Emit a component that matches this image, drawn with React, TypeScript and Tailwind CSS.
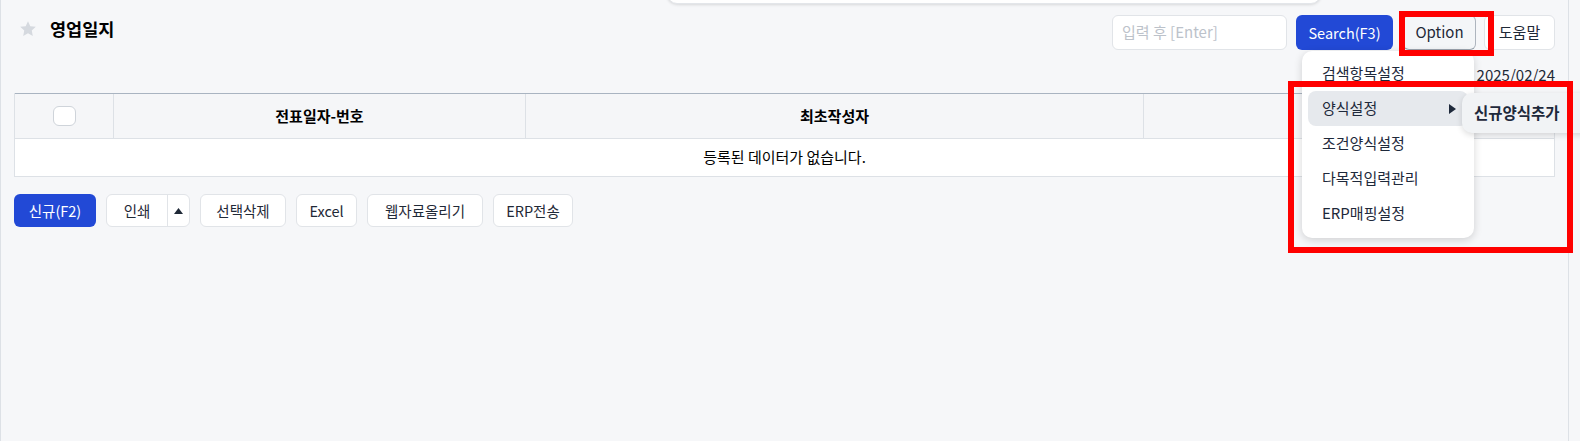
const menuItems = ["검색항목설정", "양식설정", "조건양식설정", "다목적입력관리", "ERP매핑설정"];

const bottomButtons = [
	{ label: "선택삭제", w: "w-[86px]" },
	{ label: "Excel", w: "w-[61px]" },
	{ label: "웹자료올리기", w: "w-[116px]" },
	{ label: "ERP전송", w: "w-[80px]" },
];

function Star() {
	return (
		<svg width="18" height="18" viewBox="0 0 24 24" fill="#d5d9df">
			<path d="M12 1.5l3.1 6.7 7.3.9-5.4 5 1.4 7.2L12 17.8l-6.4 3.5 1.4-7.2-5.4-5 7.3-.9z" />
		</svg>
	);
}

export default function App() {
	return (
		<div className="relative h-[441px] w-[1580px] overflow-hidden bg-[#f6f7f9] font-['Noto_Sans_CJK_KR','Noto_Sans',sans-serif] text-[#1f2937]">
			<div className="h-full w-[1569px] border-l border-r border-[#dde1e6] px-[13px]">
				{/* title + search */}
				<div className="flex h-[50px] items-start justify-between pt-[15px]">
					<div className="flex h-[28px] items-center gap-[13px] pl-[5px]">
						<Star />
						<span className="text-[17.5px] font-bold leading-none text-black">영업일지</span>
					</div>
					<div className="flex items-center">
						<div className="flex h-[35px] w-[175px] items-center rounded-md border border-[#e1e4e8] bg-white pl-[9px] text-[15px] text-[#bcc2ca]">
							입력 후 [Enter]
						</div>
						<button className="ml-[9px] h-[35px] w-[97px] rounded-md bg-[#2249d6] text-[14.5px] text-white">
							Search(F3)
						</button>
						<button className="ml-[10px] h-[35px] w-[73px] rounded-md border border-[#cfd4da] border-b-[#9aa3ad] border-r-[#aeb5be] bg-[#f4f6f8] text-[15px] text-[#1f2937]">
							Option
						</button>
						<button className="ml-[8px] h-[35px] w-[71px] rounded-md border border-[#e1e4e8] bg-white text-[15px] text-[#1f2937]">
							도움말
						</button>
					</div>
				</div>

				{/* date */}
				<div className="flex h-[43px] items-end justify-end pb-[8px] text-[15px] leading-[20px] text-[#1f2937]">
					2025/02/01 ~ 2025/02/24
				</div>

				{/* grid */}
				<div className="border-l border-r border-[#dde1e6]">
					<div className="flex h-[46px] border-t border-b border-t-[#a9b4c1] border-b-[#dde1e6] bg-[#f5f6f8] text-[15px] font-bold text-black">
						<div className="flex w-[99px] items-center justify-center border-r border-[#dde1e6]">
							<div className="h-[20px] w-[23px] rounded-md border border-[#cfd4da] bg-white" />
						</div>
						<div className="flex w-[412px] items-center justify-center border-r border-[#dde1e6]">
							전표일자-번호
						</div>
						<div className="flex w-[618px] items-center justify-center border-r border-[#dde1e6]">
							최초작성자
						</div>
						<div className="flex flex-1 items-center justify-center" />
					</div>
					<div className="flex h-[38px] items-center justify-center border-b border-[#dde1e6] bg-white text-[15px] text-black">
						등록된 데이터가 없습니다.
					</div>
				</div>

				{/* actions */}
				<div className="mt-[17px] flex h-[33px] gap-[10px] text-[14.5px]">
					<button className="w-[82px] rounded-md bg-[#2249d6] text-white">신규(F2)</button>
					<div className="flex w-[84px] rounded-md border border-[#e1e4e8] bg-white">
						<button className="w-[61px] border-r border-[#e1e4e8]">인쇄</button>
						<button className="flex flex-1 items-center justify-center">
							<svg width="9" height="6" viewBox="0 0 9 6" fill="#1f2937">
								<path d="M4.5 0L9 6H0z" />
							</svg>
						</button>
					</div>
					{bottomButtons.map((b) => (
						<button key={b.label} className={`${b.w} rounded-md border border-[#e1e4e8] bg-white text-[#1f2937]`}>
							{b.label}
						</button>
					))}
				</div>
			</div>

			{/* popover from above */}
			<div className="absolute left-[667px] top-[-12px] h-[16px] w-[654px] rounded-b-[10px] border border-[#e3e6ea] bg-white shadow-[0_1px_3px_rgba(0,0,0,0.12)]" />

			{/* option dropdown */}
			<div className="absolute left-[1302px] top-[51px] h-[187px] w-[172px] rounded-[10px] bg-white px-[6px] pt-[5px] shadow-[0_2px_8px_rgba(0,0,0,0.16)]">
				{menuItems.map((item) => (
					<div
						key={item}
						className={`flex h-[35px] items-center justify-between rounded-lg pl-[14px] pr-[12px] text-[15px] text-[#1e293b] ${item === "양식설정" ? "bg-[#e6e9ed]" : ""}`}
					>
						{item}
						{item === "양식설정" && (
							<svg width="7" height="10" viewBox="0 0 7 10" fill="#1e293b">
								<path d="M0 0L7 5L0 10z" />
							</svg>
						)}
					</div>
				))}
			</div>

			{/* submenu */}
			<div className="absolute left-[1462px] top-[93px] flex h-[40px] w-[130px] items-center rounded-l-[10px] bg-[#f1f3f5] pl-[12px] text-[15.5px] font-bold text-[#1e293b] shadow-[0_2px_6px_rgba(0,0,0,0.14)]">
				신규양식추가
			</div>

			{/* highlight boxes */}
			<div className="pointer-events-none absolute left-[1399px] top-[11px] h-[45px] w-[95px] border-[6px] border-[#ff0000]" />
			<div className="pointer-events-none absolute left-[1288px] top-[81px] h-[172px] w-[285px] border-[6px] border-[#ff0000]" />
		</div>
	);
}
